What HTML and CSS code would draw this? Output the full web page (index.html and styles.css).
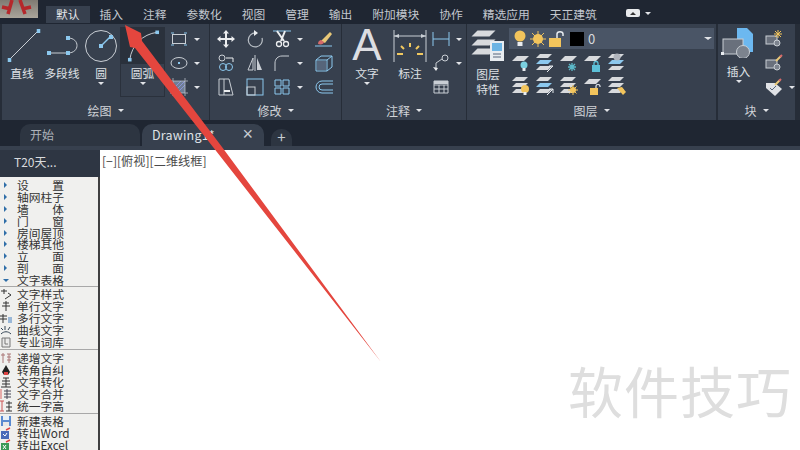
FILE: index.html
```html
<!DOCTYPE html>
<html>
<head>
    <title>AutoCAD T20</title>
    <meta charset="utf-8">
    <link rel="stylesheet" href="styles.css">
</head>
<body>
    <svg class="defs" width="0" height="0">
        <symbol id="handle" viewBox="0 0 4 4"><rect width="4" height="4" fill="#8cc8ee"/></symbol>
        <symbol id="stack" viewBox="0 0 20 20">
            <path d="M5 1h12l-4 4H1z" fill="#d8dadd"/>
            <path d="M5 7h12l-4 4H1z" fill="#d8dadd"/>
            <path d="M5 13h12l-4 4H1z" fill="#d8dadd"/>
        </symbol>
        <symbol id="stackblue" viewBox="0 0 20 20">
            <path d="M5 1h12l-4 4H1z" fill="#d8dadd"/>
            <path d="M5 7h12l-4 4H1z" fill="#8cc8ee"/>
            <path d="M5 13h12l-4 4H1z" fill="#d8dadd"/>
        </symbol>
        <symbol id="plate" viewBox="0 0 20 20"><path d="M6 3h12l-5 5H1z" fill="#d8dadd"/></symbol>
    </svg>

    <header class="menubar">
        <div class="app-logo">
            <svg width="38" height="18" viewBox="0 0 38 18"><path d="M8 14 12 0M25 14 20 0M2 7l9 2M31 7l-9 2" fill="none" stroke="#b5282b" stroke-width="3.500"/></svg>
        </div>
        <nav class="menu-tabs">
            <span class="menu-tab active">默认</span>
            <span class="menu-tab">插入</span>
            <span class="menu-tab">注释</span>
            <span class="menu-tab">参数化</span>
            <span class="menu-tab">视图</span>
            <span class="menu-tab">管理</span>
            <span class="menu-tab">输出</span>
            <span class="menu-tab">附加模块</span>
            <span class="menu-tab">协作</span>
            <span class="menu-tab">精选应用</span>
            <span class="menu-tab">天正建筑</span>
        </nav>
        <div class="view-switch"><span class="view-pill"><i></i></span><span class="caret"></span></div>
    </header>

    <section class="ribbon">
        <div class="panel panel-draw">
            <div class="panel-body">
                <div class="tool w40">
                    <svg class="big" width="40" height="36" viewBox="0 0 40 36">
                        <path d="M7 33 36 4" stroke="#c9ced4" fill="none"/>
                        <use href="#handle" x="5.5" y="31" width="4" height="4"/><use href="#handle" x="34.5" y="2" width="4" height="4"/>
                    </svg>
                    <span class="label">直线</span>
                </div>
                <div class="tool w40">
                    <svg class="big" width="40" height="36" viewBox="0 0 40 36">
                        <path d="M7 26H26M26 11c12 0 12 15 0 15" stroke="#c9ced4" fill="none"/>
                        <use href="#handle" x="5" y="24" width="4" height="4"/><use href="#handle" x="24" y="24" width="4" height="4"/><use href="#handle" x="24" y="9" width="4" height="4"/>
                    </svg>
                    <span class="label">多段线</span>
                </div>
                <div class="tool w38">
                    <svg class="big" width="38" height="36" viewBox="0 0 38 36">
                        <circle cx="19" cy="19" r="15.5" fill="none" stroke="#c9ced4"/>
                        <path d="M19 19 28 10" stroke="#8cc8ee" stroke-width="1.5"/>
                        <use href="#handle" x="17" y="17" width="4" height="4"/><use href="#handle" x="27" y="8" width="4" height="4"/>
                    </svg>
                    <span class="label">圆</span>
                    <span class="caret"></span>
                </div>
                <div class="tool w45 tool-on">
                    <svg class="big" width="44" height="37" viewBox="0 0 44 37">
                        <path d="M9 33C11 18 22 7 37 5" stroke="#c9ced4" fill="none"/>
                        <use href="#handle" x="7" y="31" width="4" height="4"/><use href="#handle" x="35" y="3" width="4" height="4"/>
                    </svg>
                    <span class="label">圆弧</span>
                    <span class="caret"></span>
                </div>
                <div class="small-col">
                    <div class="small">
                        <svg width="18" height="18" viewBox="0 0 18 18"><rect x="2.500" y="4.500" width="13" height="9" fill="none" stroke="#c9ced4"/><path d="M1 3h3M14 3h3M1 15h3M14 15h3" stroke="#8cc8ee"/></svg>
                        <span class="caret"></span>
                    </div>
                    <div class="small">
                        <svg width="18" height="18" viewBox="0 0 18 18"><ellipse cx="9" cy="9" rx="8" ry="5.500" fill="none" stroke="#c9ced4"/><rect x="8" y="8" width="2" height="2" fill="#8cc8ee"/></svg>
                        <span class="caret"></span>
                    </div>
                    <div class="small">
                        <svg width="18" height="18" viewBox="0 0 18 18"><rect x="3" y="3" width="12" height="12" fill="#6f7f96"/><path d="M3 11 11 3M3 15 15 3M7 15l8-8" stroke="#8a94d8"/><path d="M0 3h18M3 0v18M0 15h18M15 0v18" stroke="#c9ced4" opacity=".7"/></svg>
                        <span class="caret"></span>
                    </div>
                </div>
            </div>
            <div class="panel-title">绘图 <span class="caret"></span></div>
        </div>

        <div class="panel panel-modify">
            <div class="panel-body grid-modify">
                <div class="small">
                    <svg width="18" height="18" viewBox="0 0 18 18"><path d="M9 1v16M1 9h16" stroke="#eceef0" stroke-width="2"/><path d="M9 0l3 3.500H6zM9 18l3-3.500H6zM0 9l3.500-3v6zM18 9l-3.500-3v6z" fill="#eceef0"/></svg>
                </div>
                <div class="small">
                    <svg width="18" height="18" viewBox="0 0 18 18"><path d="M10 3A7 7 0 1 0 16 8" fill="none" stroke="#b9bfc6" stroke-width="1.200"/><path d="M8 0l4 3-4 3z" fill="#eceef0"/></svg>
                </div>
                <div class="small">
                    <svg width="18" height="18" viewBox="0 0 18 18"><path d="M0 1h18" stroke="#8cc8ee"/><path d="M4 1l7 10M12 1 8 11" stroke="#eceef0" stroke-width="2"/><circle cx="6" cy="14" r="2.500" fill="none" stroke="#eceef0" stroke-width="1.300"/><circle cx="13" cy="14" r="2.500" fill="none" stroke="#eceef0" stroke-width="1.300"/></svg>
                    <span class="caret"></span>
                </div>
                <div class="small">
                    <svg width="18" height="18" viewBox="0 0 18 18"><path d="M0 16h17" stroke="#8cc8ee"/><path d="M6 11 15 2l2 2-7 9z" fill="#e8c878"/><path d="M3 14c0-3 2-4 3-4l3 2c0 2-3 3-6 2z" fill="#d66a6a"/></svg>
                </div>

                <div class="small">
                    <svg width="18" height="18" viewBox="0 0 18 18"><circle cx="5" cy="4" r="3" fill="none" stroke="#c9ced4"/><path d="M9 4h7v4" fill="none" stroke="#eceef0"/><circle cx="6" cy="13" r="3.500" fill="none" stroke="#8cc8ee"/><circle cx="12" cy="13" r="3.500" fill="none" stroke="#8cc8ee"/></svg>
                </div>
                <div class="small">
                    <svg width="18" height="18" viewBox="0 0 18 18"><path d="M9 1v16M7 4 2 16h5z" fill="none" stroke="#c9ced4"/><path d="M11 4l5 12h-5z" fill="#c9ced4"/></svg>
                </div>
                <div class="small">
                    <svg width="18" height="18" viewBox="0 0 18 18"><path d="M2 17V9c0-4 3-7 7-7h7" fill="none" stroke="#c9ced4"/></svg>
                    <span class="caret"></span>
                </div>
                <div class="small">
                    <svg width="18" height="18" viewBox="0 0 18 18"><path d="M1 6h11v11H1zM1 6l5-4h11l-5 4M12 17l5-4V2" fill="none" stroke="#8cc8ee"/><path d="M2 7h9v9H2z" fill="#56657a"/></svg>
                </div>

                <div class="small">
                    <svg width="18" height="18" viewBox="0 0 18 18"><path d="M2 1v16h14L12 1z" fill="none" stroke="#c9ced4"/><path d="M7 1v16" stroke="#c9ced4"/><path d="M7 13h6" stroke="#eceef0" stroke-width="2"/></svg>
                </div>
                <div class="small">
                    <svg width="18" height="18" viewBox="0 0 18 18"><rect x="1" y="1" width="16" height="16" fill="none" stroke="#8cc8ee"/><rect x="1" y="9" width="8" height="8" fill="none" stroke="#c9ced4"/></svg>
                </div>
                <div class="small">
                    <svg width="18" height="18" viewBox="0 0 18 18"><path d="M2 2h6v6H2zM10 2h6v6h-6zM2 10h6v6H2zM10 10h6v6h-6z" fill="none" stroke="#8cc8ee"/></svg>
                    <span class="caret"></span>
                </div>
                <div class="small">
                    <svg width="18" height="18" viewBox="0 0 18 18"><path d="M18 3H7a6 6 0 0 0 0 12h11M18 6H7a3 3 0 0 0 0 6h11" fill="none" stroke="#8cc8ee"/></svg>
                </div>
            </div>
            <div class="panel-title">修改 <span class="caret"></span></div>
        </div>

        <div class="panel panel-note">
            <div class="panel-body">
                <div class="tool w50">
                    <span class="big-a">A</span>
                    <span class="label">文字</span>
                    <span class="caret"></span>
                </div>
                <div class="tool w36">
                    <svg class="big" width="36" height="36" viewBox="0 0 36 36">
                        <path d="M2 3v32M34 3v32M2 9h32" stroke="#c9ced4" fill="none"/>
                        <path d="M2 9l5-2v4zM34 9l-5-2v4z" fill="#c9ced4"/>
                        <path d="M18 16v4M9 19l3 3M27 19l-3 3M5 27h6M25 27h6" stroke="#f0c860" stroke-width="2"/>
                    </svg>
                    <span class="label">标注</span>
                </div>
                <div class="small-col note-col">
                    <div class="small">
                        <svg width="18" height="18" viewBox="0 0 18 18"><path d="M1 2v14M17 2v14M1 9h16" stroke="#8cc8ee" fill="none"/></svg>
                        <span class="caret"></span>
                    </div>
                    <div class="small">
                        <svg width="18" height="18" viewBox="0 0 18 18"><circle cx="13" cy="4" r="3" fill="none" stroke="#c9ced4"/><path d="M10 5 4 9v5" fill="none" stroke="#c9ced4"/><path d="M1 13l3 4 2-3z" fill="#eceef0"/></svg>
                        <span class="caret"></span>
                    </div>
                    <div class="small">
                        <svg width="18" height="18" viewBox="0 0 18 18"><path d="M2 3h14v12H2zM2 7h14M2 11h14M7 7v8M12 7v8" fill="none" stroke="#c9ced4"/><path d="M2 3h14v3H2z" fill="#c9ced4"/></svg>
                    </div>
                </div>
            </div>
            <div class="panel-title">注释 <span class="caret"></span></div>
        </div>

        <div class="panel panel-layer">
            <div class="panel-body">
                <div class="tool w42">
                    <svg class="big" width="36" height="36" viewBox="0 0 36 36">
                        <use href="#stack" x="0" y="2" width="30" height="30"/>
                        <rect x="20" y="14" width="14" height="20" fill="#e8ecf0"/><rect x="22" y="16" width="10" height="8" fill="#6cb4e4"/><path d="M23 27h8M23 30h8" stroke="#56657a"/>
                    </svg>
                    <span class="label tight">图层<br>特性</span>
                </div>
                <div class="layer-main">
                    <div class="layer-combo">
                        <svg width="14" height="17" viewBox="0 0 14 17"><circle cx="7" cy="6" r="5.500" fill="#f2c45c"/><rect x="4.500" y="12" width="5" height="4" fill="#e8ecf0"/></svg>
                        <svg width="16" height="16" viewBox="0 0 16 16"><path d="M8 0v16M0 8h16M2 2l12 12M14 2 2 14" stroke="#f2c45c"/><circle cx="8" cy="8" r="5" fill="#f2c45c"/></svg>
                        <svg width="16" height="16" viewBox="0 0 16 16"><rect x="0" y="7" width="12" height="9" fill="#f2c45c"/><path d="M8 7V3c0-3 6-3 6 0v2" fill="none" stroke="#e8ecf0" stroke-width="1.500"/></svg>
                        <span class="swatch"></span>
                        <span class="layer-name">0</span>
                        <span class="caret combo-caret"></span>
                    </div>
                    <div class="layer-icons">
                        <svg width="20" height="20" viewBox="0 0 20 20"><use href="#plate"/><circle cx="13" cy="12" r="3.500" fill="#7ad0e0"/><rect x="11.500" y="15" width="3" height="3" fill="#e8ecf0"/></svg>
                        <svg width="20" height="20" viewBox="0 0 20 20"><use href="#stackblue"/><path d="M12 19l6-6M18 13h-4" stroke="#e8ecf0"/></svg>
                        <svg width="20" height="20" viewBox="0 0 20 20"><use href="#plate"/><path d="M13 10v8M9 14h8M10 11l6 6M16 11l-6 6" stroke="#5cb8c8" stroke-width="1.300"/></svg>
                        <svg width="20" height="20" viewBox="0 0 20 20"><use href="#plate"/><rect x="9" y="12" width="8" height="7" fill="#5cc0d8"/><path d="M11 12V10c0-2 4-2 4 0v2" fill="none" stroke="#5cc0d8" stroke-width="1.300"/></svg>
                        <svg width="20" height="20" viewBox="0 0 20 20"><use href="#stackblue"/><circle cx="10" cy="4" r="3.500" fill="#b0b4bc"/></svg>

                        <svg width="20" height="20" viewBox="0 0 20 20"><use href="#stack"/><circle cx="14" cy="13" r="4" fill="#f2c45c"/><rect x="12.500" y="16" width="3" height="3" fill="#e8ecf0"/></svg>
                        <svg width="20" height="20" viewBox="0 0 20 20"><use href="#stackblue"/><path d="M12 19l6-6M18 13h-4v0M18 13v4" stroke="#e8ecf0"/></svg>
                        <svg width="20" height="20" viewBox="0 0 20 20"><use href="#stack"/><path d="M14 9v10M9 14h10M10.500 10.500l7 7M17.500 10.500l-7 7" stroke="#f2c45c"/><circle cx="14" cy="14" r="3" fill="#f2c45c"/></svg>
                        <svg width="20" height="20" viewBox="0 0 20 20"><use href="#plate"/><rect x="7" y="12" width="8" height="7" fill="#f2c45c"/><path d="M13 12V10c0-2 4-2 4 0v1" fill="none" stroke="#e8ecf0" stroke-width="1.200"/></svg>
                        <svg width="20" height="20" viewBox="0 0 20 20"><use href="#stack"/><path d="M10 12l5-1 4 5-3 3z" fill="#f2c45c"/></svg>
                    </div>
                </div>
            </div>
            <div class="panel-title">图层 <span class="caret"></span></div>
        </div>

        <div class="panel panel-block">
            <div class="panel-body">
                <div class="tool w40 insert-tool">
                    <svg class="insert-icon" width="36" height="30" viewBox="0 0 36 30">
                        <path d="M16 0h10l6 6v18H16z" fill="#6cb8f0"/>
                        <rect x="2" y="11" width="20" height="15" fill="#69707c" stroke="#c9ced4"/>
                        <circle cx="22" cy="24" r="6.500" fill="#7c838e" stroke="#c9ced4"/>
                        <rect x="0" y="24" width="3" height="3" fill="#e8ecf0"/>
                    </svg>
                    <span class="label">插入</span>
                    <span class="caret"></span>
                </div>
                <div class="small-col block-col">
                    <div class="small">
                        <svg width="18" height="18" viewBox="0 0 18 18"><rect x="1" y="6" width="11" height="8" fill="#69707c" stroke="#c9ced4"/><circle cx="12" cy="13" r="3" fill="#7c838e" stroke="#c9ced4"/><path d="M13 0v8M9 4h8M10 1l6 6M16 1l-6 6" stroke="#f2c45c"/></svg>
                    </div>
                    <div class="small">
                        <svg width="18" height="18" viewBox="0 0 18 18"><rect x="1" y="6" width="11" height="8" fill="#69707c" stroke="#c9ced4"/><circle cx="12" cy="13" r="3" fill="#7c838e" stroke="#c9ced4"/><path d="M11 7l5-5" stroke="#e8c878" stroke-width="2"/><path d="M15 3l2-2" stroke="#d66a6a" stroke-width="2"/></svg>
                    </div>
                    <div class="small">
                        <svg width="18" height="18" viewBox="0 0 18 18"><path d="M1 5h9l7 6-7 7-9-8z" fill="#e0e2e6"/><path d="M5 10l2 2 4-4" stroke="#56657a" fill="none"/><path d="M10 7l5-5" stroke="#e8c878" stroke-width="2"/><path d="M14 3l2-2" stroke="#d66a6a" stroke-width="2"/></svg>
                        <span class="caret"></span>
                    </div>
                </div>
            </div>
            <div class="panel-title">块 <span class="caret"></span></div>
        </div>
    </section>

    <div class="filetabs">
        <div class="filetab">开始</div>
        <div class="filetab current"><span>Drawing1*</span><b>×</b></div>
        <div class="filetab plus">+</div>
    </div>

    <main class="workspace">
        <aside class="t20">
            <div class="t20-title">T20天...</div>
            <div class="t20-list">
                <div class="t20-group first">
                    <div class="row"><i class="tri"></i><span class="name spread"><span>设</span><span>置</span></span></div>
                    <div class="row"><i class="tri"></i><span class="name">轴网柱子</span></div>
                    <div class="row"><i class="tri"></i><span class="name spread"><span>墙</span><span>体</span></span></div>
                    <div class="row"><i class="tri"></i><span class="name spread"><span>门</span><span>窗</span></span></div>
                    <div class="row"><i class="tri"></i><span class="name">房间屋顶</span></div>
                    <div class="row"><i class="tri"></i><span class="name">楼梯其他</span></div>
                    <div class="row"><i class="tri"></i><span class="name spread"><span>立</span><span>面</span></span></div>
                    <div class="row"><i class="tri"></i><span class="name spread"><span>剖</span><span>面</span></span></div>
                    <div class="row"><i class="tri down"></i><span class="name">文字表格</span></div>
                </div>
                <div class="t20-group second">
                    <div class="row"><svg class="ico" width="12" height="12" viewBox="0 0 12 12"><path d="M1 3h6M4 1v5M8 5l3 2-6 4" stroke="#333" fill="none"/></svg><span class="name">文字样式</span></div>
                    <div class="row"><svg class="ico" width="12" height="12" viewBox="0 0 12 12"><path d="M3 3h6M2 6h8M6 1v10" stroke="#333" fill="none"/></svg><span class="name">单行文字</span></div>
                    <div class="row"><svg class="ico" width="12" height="12" viewBox="0 0 12 12"><path d="M0 4h7M0 7h7M3 2v9" stroke="#333" fill="none"/><rect x="8" y="5" width="4" height="6" fill="#9ab8d8"/></svg><span class="name">多行文字</span></div>
                    <div class="row"><svg class="ico" width="12" height="12" viewBox="0 0 12 12"><path d="M1 4l2 2M5 2v4M10 3 8 6M1 10c3-3 7-3 10 0" stroke="#345" fill="none"/></svg><span class="name">曲线文字</span></div>
                    <div class="row"><svg class="ico" width="12" height="12" viewBox="0 0 12 12"><path d="M2 2h8v9H2zM5 2v6h3" stroke="#777" fill="#e8e8e8"/></svg><span class="name">专业词库</span></div>
                </div>
                <div class="t20-group third">
                    <div class="row"><svg class="ico" width="12" height="12" viewBox="0 0 12 12"><path d="M1 3h4M3 1v10M7 2h4M7 5h4M7 8h4M9 2v9" stroke="#a77" fill="none"/></svg><span class="name">递增文字</span></div>
                    <div class="row"><svg class="ico" width="12" height="12" viewBox="0 0 12 12"><path d="M6 1 2 8l2 3h4l2-3z" fill="#222"/><path d="M4 8h4v3H4z" fill="#d44"/></svg><span class="name">转角自纠</span></div>
                    <div class="row"><svg class="ico" width="12" height="12" viewBox="0 0 12 12"><path d="M3 2h6M2 5h8M2 8h8M1 11h10M6 2v9" stroke="#333" fill="none"/></svg><span class="name">文字转化</span></div>
                    <div class="row"><svg class="ico" width="12" height="12" viewBox="0 0 12 12"><path d="M1 1v10" stroke="#d66"/><path d="M4 3h7M4 6h7M4 9h7M7 1v10" stroke="#445" fill="none"/></svg><span class="name">文字合并</span></div>
                    <div class="row"><svg class="ico" width="12" height="12" viewBox="0 0 12 12"><path d="M2 1v10M0 1h4M0 11h4" stroke="#c55" fill="none"/><path d="M6 3h6M6 7h6M6 11h6M9 1v10" stroke="#333" fill="none"/></svg><span class="name">统一字高</span></div>
                </div>
                <div class="t20-group fourth">
                    <div class="row"><svg class="ico" width="12" height="12" viewBox="0 0 12 12"><rect x="1" y="1" width="10" height="10" fill="#5a8ad0"/><rect x="3" y="1" width="6" height="4" fill="#e8f0f8"/><rect x="3" y="7" width="6" height="4" fill="#e8e8e8"/></svg><span class="name">新建表格</span></div>
                    <div class="row"><svg class="ico" width="12" height="12" viewBox="0 0 12 12"><rect x="1" y="4" width="8" height="8" fill="#4a6ab8"/><path d="M3 7l2 2 2-3" stroke="#fff" fill="none"/><path d="M6 3l4-2" stroke="#d44" stroke-width="1.500"/></svg><span class="name">转出Word</span></div>
                    <div class="row"><svg class="ico" width="12" height="12" viewBox="0 0 12 12"><rect x="1" y="4" width="8" height="8" fill="#3a9a58"/><path d="M3 6l3 4M6 6l-3 4" stroke="#fff" fill="none"/><path d="M6 3l4-2" stroke="#d44" stroke-width="1.500"/></svg><span class="name">转出Excel</span></div>
                </div>
            </div>
        </aside>
        <div class="canvas">
            <span class="view-label">[−][俯视][二维线框]</span>
        </div>
    </main>

    <svg class="red-arrow" width="800" height="450" viewBox="0 0 800 450">
        <path d="M125 25 141 33 142 41 222 147 381 362 213 147 135 48 130 47z" fill="#e4463e"/>
    </svg>
    <div class="watermark">软件技巧</div>
</body>
</html>
```

FILE: styles.css
```css
html, body {
    height: 100%;
    margin: 0;
    padding: 0;
    overflow: hidden;
}
body {
    width: 800px;
    height: 450px;
    position: relative;
    display: flex;
    flex-direction: column;
    background: #1f2632;
    font-family: "Noto Sans CJK SC", "Noto Sans", sans-serif;
    font-size: 12px;
}
.defs {
    position: absolute;
}
svg {
    display: block;
    flex-shrink: 0;
}

/* top menu */
.menubar {
    height: 24px;
    flex-shrink: 0;
    display: flex;
    align-items: flex-start;
    background: #1f2632;
}
.app-logo {
    width: 38px;
    height: 18px;
    background: linear-gradient(180deg, #7f7a72 0%, #aaa59b 100%);
}
.menu-tabs {
    display: flex;
    margin: 6px 0 0 8px;
}
.menu-tab {
    height: 17px;
    line-height: 15px;
    padding: 0 10px;
    color: #c3c8cf;
    font-size: 11.75px;
}
.menu-tab.active {
    background: #37404e;
    color: #e4e6ea;
}
.view-switch {
    display: flex;
    align-items: center;
    gap: 5px;
    margin: 9px 0 0 19px;
}
.view-pill {
    width: 14px;
    height: 8px;
    background: #e8eaec;
    border-radius: 2px;
    display: flex;
    align-items: center;
    justify-content: center;
}
.view-pill i {
    border-left: 3px solid transparent;
    border-right: 3px solid transparent;
    border-bottom: 3px solid #333;
}
.caret {
    display: block;
    width: 0;
    height: 0;
    border-left: 3px solid transparent;
    border-right: 3px solid transparent;
    border-top: 3.5px solid #e2e4e8;
}

/* ribbon */
.ribbon {
    height: 96px;
    flex-shrink: 0;
    display: flex;
    gap: 1px;
    padding-left: 2px;
    background: #262d38;
}
.panel {
    display: flex;
    flex-direction: column;
    background: #37404e;
}
.panel-draw { width: 207px; }
.panel-modify { width: 131px; }
.panel-note { width: 124px; }
.panel-layer { width: 249px; margin-right: 1px; }
.panel-block { width: 77px; }
.panel-body {
    height: 79px;
    display: flex;
    padding-top: 3px;
    box-sizing: border-box;
}
.panel-title {
    flex: 1;
    display: flex;
    align-items: center;
    justify-content: center;
    gap: 6px;
    color: #d0d3d8;
    font-size: 12px;
    padding-bottom: 1px;
}
.tool {
    display: flex;
    flex-direction: column;
    align-items: center;
    box-sizing: border-box;
}
.w36 { width: 36px; }
.w38 { width: 38px; }
.w40 { width: 40px; }
.w42 { width: 42px; }
.w45 { width: 45px; }
.w50 { width: 50px; }
.tool .caret {
    margin-top: 2px;
}
.tool-on {
    height: 70px;
    border: 1px solid #2a313c;
    border-top: none;
}
.tool-on .big {
    background: #2a313c;
    width: 100%;
}
.label {
    margin-top: 3px;
    line-height: 14px;
    color: #dfe1e5;
    font-size: 11.75px;
    text-align: center;
    white-space: nowrap;
}
.tool-on .label {
    margin-top: 2px;
}
.label.tight {
    line-height: 15px;
}
.big-a {
    height: 36px;
    line-height: 36px;
    font-family: "Liberation Sans", sans-serif;
    font-size: 44px;
    color: #dcdee2;
}
.small-col {
    display: flex;
    flex-direction: column;
    margin-left: 5px;
}
.note-col { margin-left: 4px; }
.block-col { margin-left: 8px; }
.small {
    height: 24px;
    display: flex;
    align-items: center;
    gap: 6px;
}
.grid-modify {
    display: grid;
    grid-template-columns: 29px 29px 40px 29px;
    grid-auto-rows: 24px;
    padding-left: 1px;
    justify-items: center;
}
.grid-modify .small:nth-child(4n+3) {
    justify-self: start;
    margin-left: 4px;
}
.insert-tool { margin-left: 2px; }
.insert-icon { height: 30px; margin-top: 1px; }
.insert-tool .label { margin-top: 6px; }

/* layer controls */
.layer-main {
    display: flex;
    flex-direction: column;
    width: 205px;
}
.layer-combo {
    height: 21px;
    margin-top: 1px;
    background: #4a5566;
    display: flex;
    align-items: center;
    gap: 3px;
    padding-left: 4px;
    box-sizing: border-box;
}
.swatch {
    width: 14px;
    height: 14px;
    background: #000;
    margin-left: 2px;
}
.layer-name {
    color: #d8dadd;
    font-size: 13px;
    margin-left: 1px;
}
.combo-caret {
    margin-left: auto;
    margin-right: 2px;
    border-left-width: 4px;
    border-right-width: 4px;
}
.layer-icons {
    display: grid;
    grid-template-columns: repeat(5, 24px);
    grid-auto-rows: 23px;
    padding: 2px 0 0 0;
    justify-items: center;
    align-items: center;
}

/* file tabs */
.filetabs {
    height: 26px;
    flex-shrink: 0;
    display: flex;
    align-items: flex-end;
    padding: 0 0 0 20px;
    background: #1f2632;
}
.filetab {
    width: 120px;
    height: 22px;
    margin-right: 2px;
    padding-left: 10px;
    box-sizing: border-box;
    background: #2d3541;
    border-radius: 10px 10px 0 0;
    color: #aeb3ba;
    line-height: 21px;
    font-size: 12px;
}
.filetab.current {
    width: 122px;
    background: #37404e;
    color: #dfe1e5;
    display: flex;
    justify-content: space-between;
    padding-right: 11px;
}
.filetab.current span {
    font-size: 12.5px;
    letter-spacing: 0.2px;
}
.filetab.current b {
    font-weight: normal;
    font-family: "Liberation Sans", sans-serif;
    font-size: 18px;
    color: #c8ccd2;
}
.filetab.plus {
    width: 21px;
    height: 17px;
    margin-left: 5px;
    padding: 0;
    text-align: center;
    line-height: 16px;
    font-size: 15px;
    color: #c8ccd2;
}

/* workspace */
.workspace {
    flex: 1;
    display: flex;
    border-top: 4px solid #37404e;
    min-height: 0;
}
.t20 {
    width: 100px;
    flex-shrink: 0;
    display: flex;
    flex-direction: column;
}
.t20-title {
    height: 27px;
    flex-shrink: 0;
    background: #2e3643;
    color: #d8dadd;
    font-size: 12px;
    line-height: 23px;
    padding-left: 14px;
}
.t20-list {
    flex: 1;
    background: #f0f0ee;
    border-right: 2px solid #404040;
    overflow: hidden;
    padding-top: 2px;
}
.t20-group {
    border-top: 1px solid #a8a8a8;
}
.t20-group.first {
    border-top: none;
}
.t20-group.second { padding: 1px 0 2px; }
.t20-group.third { padding: 2px 0 1px; }
.t20-group.fourth { padding-top: 1px; }
.row {
    height: 11.9px;
    display: flex;
    align-items: center;
}
.ico {
    width: 12px;
}
.tri {
    display: block;
    width: 0;
    height: 0;
    margin-left: 4px;
    margin-right: 5px;
    border-top: 3px solid transparent;
    border-bottom: 3px solid transparent;
    border-left: 3px solid #2f6ea8;
}
.tri.down {
    margin-left: 3px;
    margin-right: 3px;
    border-left: 3px solid transparent;
    border-right: 3px solid transparent;
    border-top: 3px solid #2f6ea8;
    border-bottom: none;
}
.name {
    margin-left: 5px;
    line-height: 12px;
    font-size: 11.75px;
    color: #333;
    white-space: nowrap;
}
.name.spread {
    width: 47px;
    display: flex;
    justify-content: space-between;
}
.canvas {
    flex: 1;
    background: #fff;
    padding: 2px 0 0 2px;
}
.view-label {
    color: #4a4a4a;
    font-size: 12.2px;
    line-height: 18px;
}

/* overlays */
.red-arrow {
    position: absolute;
    left: 0;
    top: 0;
    pointer-events: none;
}
.watermark {
    position: absolute;
    left: 568px;
    top: 349px;
    color: #dedede;
    font-size: 55px;
    line-height: 80px;
    letter-spacing: 1px;
    white-space: nowrap;
}
```
